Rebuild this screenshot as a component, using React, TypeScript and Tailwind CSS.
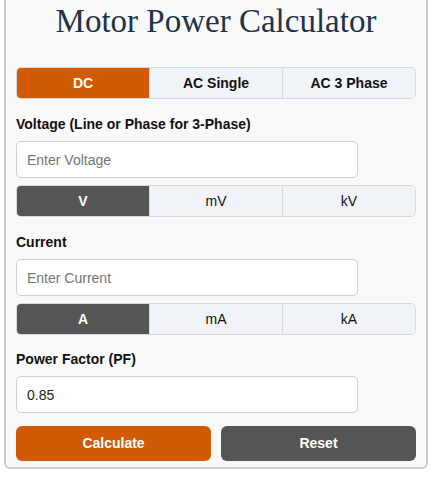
import { useState } from "react";

const modes = ["DC", "AC Single", "AC 3 Phase"];

function Segmented({
  options,
  value,
  onChange,
  active,
  boldAll,
}: {
  options: string[];
  value: string;
  onChange: (v: string) => void;
  active: string;
  boldAll?: boolean;
}) {
  return (
    <div className="flex h-[32px] overflow-hidden rounded-[5px] border border-[#d6d9de]">
      {options.map((opt, i) => {
        const on = opt === value;
        return (
          <button
            key={opt}
            type="button"
            onClick={() => onChange(opt)}
            className={`flex-1 text-[14px] ${i > 0 ? "border-l border-[#d6d9de]" : ""} ${
              on ? `${active} font-bold text-white` : `bg-[#f0f4f9] text-[#111] ${boldAll ? "font-bold" : ""}`
            }`}
          >
            {opt}
          </button>
        );
      })}
    </div>
  );
}

function Field({
  label,
  placeholder,
  value,
  onChange,
  className = "",
}: {
  label: string;
  placeholder?: string;
  value: string;
  onChange: (v: string) => void;
  className?: string;
}) {
  return (
    <div className={className}>
      <label className="block text-[14px] font-bold leading-4 text-[#111]">{label}</label>
      <input
        value={value}
        placeholder={placeholder}
        onChange={(e) => onChange(e.target.value)}
        className="mt-[9px] block h-[37px] w-[342px] rounded-[5px] border border-[#cfcfcf] bg-white px-[10px] text-[14px] text-[#222] placeholder:text-[#757575] outline-none"
      />
    </div>
  );
}

export default function App() {
  const [mode, setMode] = useState("DC");
  const [voltage, setVoltage] = useState("");
  const [vUnit, setVUnit] = useState("V");
  const [current, setCurrent] = useState("");
  const [aUnit, setAUnit] = useState("A");
  const [pf, setPf] = useState("0.85");

  function reset() {
    setVoltage("");
    setCurrent("");
    setPf("0.85");
    setVUnit("V");
    setAUnit("A");
  }

  return (
    <div className="min-h-[478px] bg-white font-['Liberation_Sans',Arial,sans-serif]">
      <div className="ml-[4px] w-[424px] rounded-b-[6px] border-2 border-t-0 border-[#cccccc] bg-[#f9f9f9] px-[10px] pb-[6px] pt-[1px]">
        <h1 className="text-center font-['Liberation_Serif','Times_New_Roman',serif] text-[33px] leading-[40px] text-[#1f3249]">
          Motor Power Calculator
        </h1>

        <div className="mt-[26px]">
          <Segmented options={modes} value={mode} onChange={setMode} active="bg-[#d05a06]" boldAll />
        </div>

        <Field
          className="mt-[17px]"
          label="Voltage (Line or Phase for 3-Phase)"
          placeholder="Enter Voltage"
          value={voltage}
          onChange={setVoltage}
        />
        <div className="mt-[7px]">
          <Segmented options={["V", "mV", "kV"]} value={vUnit} onChange={setVUnit} active="bg-[#555555]" />
        </div>

        <Field
          className="mt-[17px]"
          label="Current"
          placeholder="Enter Current"
          value={current}
          onChange={setCurrent}
        />
        <div className="mt-[7px]">
          <Segmented options={["A", "mA", "kA"]} value={aUnit} onChange={setAUnit} active="bg-[#555555]" />
        </div>

        <Field className="mt-[16px]" label="Power Factor (PF)" value={pf} onChange={setPf} />

        <div className="mt-[13px] flex gap-[10px]">
          <button
            type="button"
            className="h-[35px] flex-1 rounded-[6px] bg-[#d05a06] text-[14px] font-bold text-white"
          >
            Calculate
          </button>
          <button
            type="button"
            onClick={reset}
            className="h-[35px] flex-1 rounded-[6px] bg-[#555555] text-[14px] font-bold text-white"
          >
            Reset
          </button>
        </div>
      </div>
    </div>
  );
}
